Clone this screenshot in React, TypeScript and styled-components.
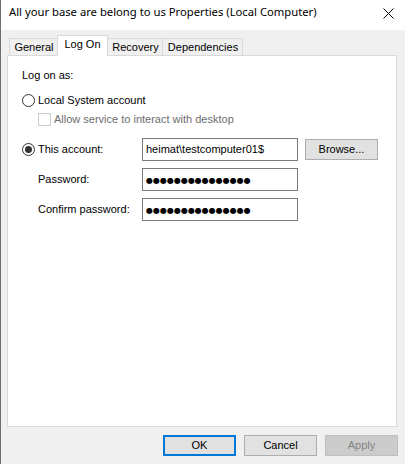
import React from "react";
import styled, { createGlobalStyle } from "styled-components";

const Global = createGlobalStyle`
  html, body { margin: 0; padding: 0; background: #f0f0f0; }
  * { box-sizing: border-box; }
`;

const Window = styled.div`
  width: 405px;
  height: 464px;
  display: flex;
  flex-direction: column;
  border-left: 1px solid #6f6f6f;
  background: #f0f0f0;
  font-family: "Liberation Sans", Arial, sans-serif;
  font-size: 11px;
  line-height: 13px;
  color: #000;
`;

const TitleBar = styled.div`
  height: 30px;
  flex: none;
  background: #fff;
  display: flex;
  align-items: center;
  padding: 0 0 0 8px;
`;

const Title = styled.div`
  flex: 1;
  font-family: "Noto Sans", "Segoe UI", sans-serif;
  font-size: 11.25px;
  line-height: 16px;
  margin-top: -6px;
`;

const CloseButton = styled.div`
  width: 46px;
  height: 30px;
  display: flex;
  align-items: flex-start;
  justify-content: center;
  padding-top: 8px;
  margin-right: -6px;
`;

const Body = styled.div`
  flex: 1;
  display: flex;
  flex-direction: column;
  padding: 5px 8px 0 6px;
`;

const TabStrip = styled.div`
  display: flex;
  align-items: flex-end;
  height: 20px;
  padding-left: 2px;
  position: relative;
  z-index: 1;
`;

const Tab = styled.div<{ $active?: boolean; $w: number }>`
  width: ${(p) => p.$w}px;
  height: ${(p) => (p.$active ? 21 : 17)}px;
  margin-bottom: ${(p) => (p.$active ? -1 : 0)}px;
  margin-left: -1px;
  border: 1px solid #d9d9d9;
  border-bottom: none;
  background: ${(p) => (p.$active ? "#fff" : "#f0f0f0")};
  display: flex;
  justify-content: center;
  padding-top: 2px;
  padding-left: ${(p) => (p.$active ? 0 : 1)}px;
  &:first-child { margin-left: 0; }
`;

const Panel = styled.div`
  height: 372px;
  flex: none;
  background: #fff;
  border: 1px solid #d9d9d9;
  padding: 13px 14px 0 14px;
  display: flex;
  flex-direction: column;
`;

const Heading = styled.div`
  height: 13px;
`;

const RadioRow = styled.label`
  display: flex;
  align-items: center;
  gap: 3px;
  height: 13px;
  margin-top: 12px;
`;

const Radio = styled.span<{ $checked?: boolean }>`
  width: 13px;
  height: 13px;
  border-radius: 50%;
  border: 1px solid #333;
  background: #fff;
  flex: none;
  display: flex;
  align-items: center;
  justify-content: center;
  &::after {
    content: "";
    display: ${(p) => (p.$checked ? "block" : "none")};
    width: 7px;
    height: 7px;
    border-radius: 50%;
    background: #333;
  }
`;

const CheckRow = styled.label`
  display: flex;
  align-items: center;
  gap: 3px;
  height: 13px;
  margin-top: 6px;
  margin-left: 16px;
  color: #6d6d6d;
`;

const CheckBox = styled.span`
  width: 13px;
  height: 13px;
  border: 1px solid #cccccc;
  background: #fff;
  flex: none;
`;

const AccountGrid = styled.div`
  display: grid;
  grid-template-columns: 113px 156px 73px;
  grid-auto-rows: 23px;
  column-gap: 7px;
  row-gap: 7px;
  margin-top: 12px;
  align-items: center;
`;

const AccountChoice = styled.span`
  display: flex;
  align-items: center;
  gap: 3px;
  white-space: nowrap;
`;

const FieldLabel = styled.span`
  padding-left: 16px;
  white-space: nowrap;
`;

const Field = styled.div`
  height: 23px;
  border: 1px solid #7a7a7a;
  background: #fff;
  padding: 0 3px;
  display: flex;
  align-items: center;
  white-space: nowrap;
  overflow: hidden;
`;

const Dots = styled.span`
  font-family: "DejaVu Sans", sans-serif;
  font-size: 8px;
  letter-spacing: 0;
  padding-top: 1px;
`;

const Button = styled.div<{ $default?: boolean; $disabled?: boolean }>`
  width: 73px;
  height: 21px;
  border: 1px solid ${(p) => (p.$default ? "#0078d7" : p.$disabled ? "#bfbfbf" : "#adadad")};
  box-shadow: ${(p) => (p.$default ? "inset 0 0 0 1px #0078d7" : "none")};
  background: ${(p) => (p.$disabled ? "#cccccc" : "#e1e1e1")};
  color: ${(p) => (p.$disabled ? "#838383" : "#000")};
  display: flex;
  align-items: center;
  justify-content: center;
`;

const BrowseButton = styled(Button)`
  align-self: start;
  margin-top: 1px;
`;

const ButtonBar = styled.div`
  display: flex;
  justify-content: flex-end;
  gap: 8px;
  margin-top: 8px;
  margin-right: -1px;
`;

const DOTS = "●".repeat(15);

export default function App() {
  return (
    <>
      <Global />
      <Window>
        <TitleBar>
          <Title>All your base are belong to us Properties (Local Computer)</Title>
          <CloseButton>
            <svg width="11" height="11" viewBox="0 0 11 11">
              <path d="M0.5 0.5 L10.5 10.5 M10.5 0.5 L0.5 10.5" stroke="#000" strokeWidth="1" fill="none" />
            </svg>
          </CloseButton>
        </TitleBar>
        <Body>
          <TabStrip>
            <Tab $w={49}>General</Tab>
            <Tab $w={51} $active>Log On</Tab>
            <Tab $w={56}>Recovery</Tab>
            <Tab $w={81}>Dependencies</Tab>
          </TabStrip>
          <Panel>
            <Heading>Log on as:</Heading>
            <RadioRow>
              <Radio />
              Local System account
            </RadioRow>
            <CheckRow>
              <CheckBox />
              Allow service to interact with desktop
            </CheckRow>
            <AccountGrid>
              <AccountChoice>
                <Radio $checked />
                This account:
              </AccountChoice>
              <Field>heimat\testcomputer01$</Field>
              <BrowseButton>Browse...</BrowseButton>
              <FieldLabel>Password:</FieldLabel>
              <Field>
                <Dots>{DOTS}</Dots>
              </Field>
              <span />
              <FieldLabel>Confirm password:</FieldLabel>
              <Field>
                <Dots>{DOTS}</Dots>
              </Field>
              <span />
            </AccountGrid>
          </Panel>
          <ButtonBar>
            <Button $default>OK</Button>
            <Button>Cancel</Button>
            <Button $disabled>Apply</Button>
          </ButtonBar>
        </Body>
      </Window>
    </>
  );
}
